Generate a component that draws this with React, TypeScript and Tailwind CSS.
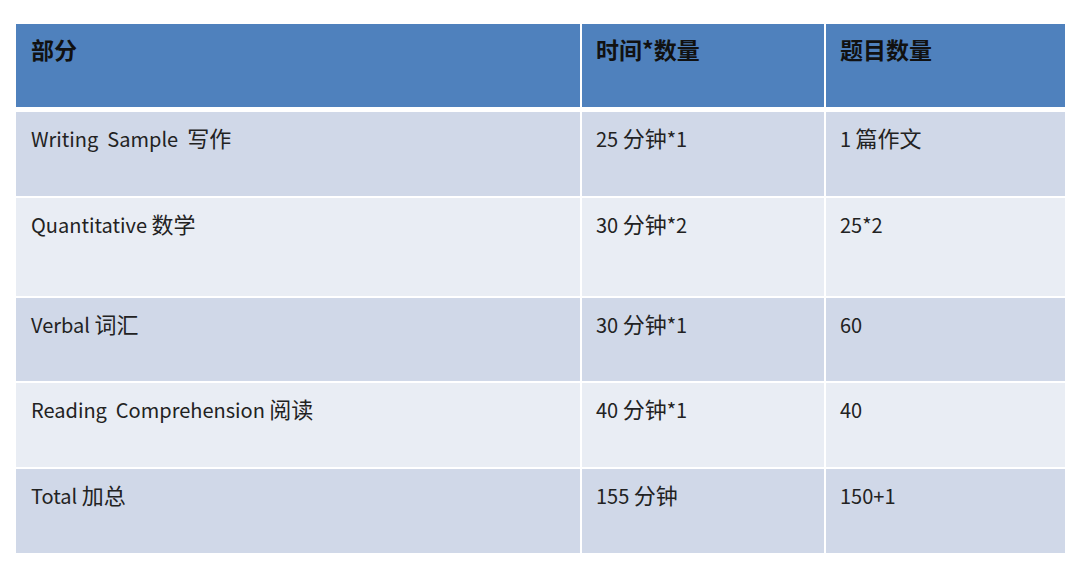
import React from 'react';

const rows = [
  { part: 'Writing\u00a0\u00a0Sample\u00a0\u00a0写作', time: '25 分钟*1', count: '1 篇作文', h: 'h-[84px]', bg: 'bg-[#d0d8e8]' },
  { part: 'Quantitative 数学', time: '30 分钟*2', count: '25*2', h: 'h-[98px]', bg: 'bg-[#e9edf4]' },
  { part: 'Verbal 词汇', time: '30 分钟*1', count: '60', h: 'h-[83px]', bg: 'bg-[#d0d8e8]' },
  { part: 'Reading\u00a0\u00a0Comprehension 阅读', time: '40 分钟*1', count: '40', h: 'h-[84px]', bg: 'bg-[#e9edf4]' },
  { part: 'Total 加总', time: '155 分钟', count: '150+1', h: 'h-[84px]', bg: 'bg-[#d0d8e8]' },
];

const font = "font-['Noto_Sans_CJK_SC','Noto_Sans',sans-serif]";

// CJK glyphs run a little larger than the latin text in the original slide
function Mixed({ text }: { text: string }) {
  const parts = text.split(/([\u4e00-\u9fff]+)/).filter(Boolean);
  return (
    <>
      {parts.map((p, i) =>
        /[\u4e00-\u9fff]/.test(p) ? (
          <span key={i}>{p}</span>
        ) : (
          <span key={i} className="text-[20px]">{p}</span>
        )
      )}
    </>
  );
}

export default function App() {
  return (
    <div className={`w-[1080px] h-[571px] bg-white pt-[24px] pl-[16px] ${font}`}>
      <div className="flex flex-col gap-[5px] w-[1049px]">
        <div className="grid grid-cols-[564px_242px_239px] gap-x-[2px] h-[83px] text-[23px] leading-[26px] font-bold text-[#111]">
          <div className="bg-[#4f81bd] pl-[15px] pt-[12px]">部分</div>
          <div className="bg-[#4f81bd] pl-[14px] pt-[12px]">时间*数量</div>
          <div className="bg-[#4f81bd] pl-[14px] pt-[12px]">题目数量</div>
        </div>
        <div className="flex flex-col gap-[2px]">
          {rows.map((r) => (
            <div
              key={r.part}
              className={`grid grid-cols-[564px_242px_239px] gap-x-[2px] ${r.h} text-[22px] leading-[26px] text-[#222]`}
            >
              <div className={`${r.bg} pl-[15px] pt-[12px]`}><Mixed text={r.part} /></div>
              <div className={`${r.bg} pl-[14px] pt-[12px]`}><Mixed text={r.time} /></div>
              <div className={`${r.bg} pl-[14px] pt-[12px]`}><Mixed text={r.count} /></div>
            </div>
          ))}
        </div>
      </div>
    </div>
  );
}
